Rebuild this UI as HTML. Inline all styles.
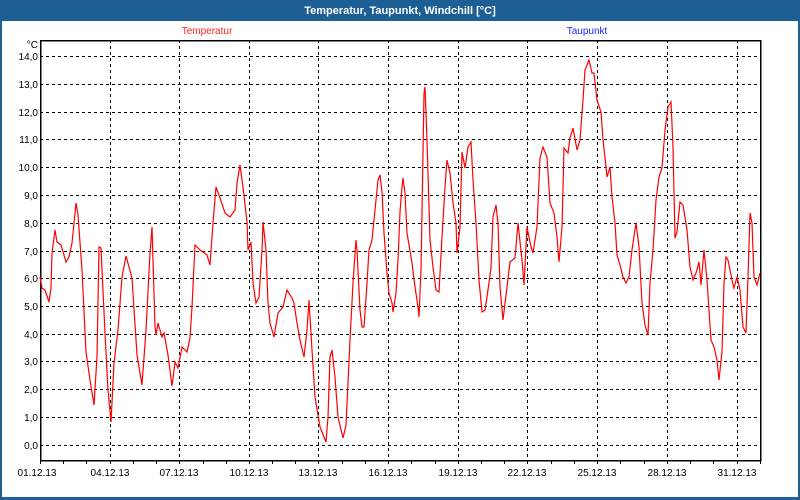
<!DOCTYPE html>
<html><head><meta charset="utf-8"><style>
html,body{margin:0;padding:0;width:800px;height:500px;overflow:hidden;background:#fff}
svg{display:block}
text{font-family:"Liberation Sans",sans-serif;font-size:10px}
</style></head><body>
<svg width="800" height="500" viewBox="0 0 800 500" xmlns="http://www.w3.org/2000/svg">
<rect x="0" y="0" width="800" height="500" fill="#1d5f95"/>
<rect x="2" y="21" width="796" height="476" fill="#fff"/>
<text x="400" y="14" text-anchor="middle" fill="#fff" style="font-weight:bold;font-size:11px">Temperatur, Taupunkt, Windchill [°C]</text>
<text x="207" y="34" text-anchor="middle" fill="#ff2020">Temperatur</text>
<text x="587" y="34" text-anchor="middle" fill="#2020ff">Taupunkt</text>
<g stroke="#000" stroke-width="1" stroke-dasharray="3,3" shape-rendering="crispEdges">
<path d="M40 56.5H760M40 84.5H760M40 112.5H760M40 139.5H760M40 167.5H760M40 195.5H760M40 223.5H760M40 251.5H760M40 278.5H760M40 306.5H760M40 334.5H760M40 361.5H760M40 389.5H760M40 417.5H760M40 445.5H760"/>
<path d="M110.5 40V460M179.5 40V460M249.5 40V460M318.5 40V460M388.5 40V460M458.5 40V460M527.5 40V460M597.5 40V460M667.5 40V460M737.5 40V460"/>
</g>
<rect x="40.5" y="40.5" width="720" height="420" fill="none" stroke="#000" stroke-width="1.5" shape-rendering="crispEdges"/>
<g stroke="#000" stroke-width="1" shape-rendering="crispEdges" id="ticks"></g>
<polyline fill="none" stroke="#ff0000" stroke-width="1.2" points="40,277 42,288 45,290 49,302 51,288 52,253 55,230 57,242 61,245 66,262 69,257 72,243 76,203 78,215 82,270 86,352 90,380 94,405 97,357 99,247 101,248 105,333 108,390 111,422 114,363 118,330 122,277 126,256 132,278 137,355 142,385 146,330 150,253 152,227 155,327 156,335 158,323 162,337 164,333 168,355 172,386 175,362 178,368 182,347 187,352 190,338 192,307 195,245 200,250 207,255 210,265 213,223 216,187 220,198 225,213 230,217 235,210 237,183 240,165 243,187 247,222 248,250 251,242 253,283 256,303 259,297 262,250 263,222 266,250 268,303 270,323 274,337 278,313 283,307 287,290 292,298 294,303 297,323 300,340 304,357 307,330 309,300 312,350 315,397 320,427 326,442 328,417 330,357 332,350 335,377 338,417 343,438 346,425 350,340 353,283 356,240 357,250 360,310 362,327 364,327 367,283 369,250 372,240 375,210 378,180 380,175 382,192 384,233 387,273 389,293 392,303 393,312 396,293 398,260 400,212 402,187 403,178 405,193 407,233 412,263 415,287 418,307 419,317 421,270 423,153 424,93 425,87 427,140 430,240 433,267 436,290 439,292 442,237 445,187 447,160 450,173 453,203 456,223 457,253 460,227 462,152 465,168 468,147 471,142 473,180 476,223 479,280 482,312 485,310 487,297 491,268 493,217 496,205 498,223 500,287 503,320 507,287 510,262 515,258 518,223 522,260 524,285 527,227 531,247 533,253 537,227 540,158 543,147 547,157 550,203 554,213 557,237 559,262 562,227 564,148 568,153 570,138 573,128 577,150 580,140 583,100 585,70 589,60 592,73 594,73 597,100 601,112 603,140 606,167 607,177 610,167 612,197 615,223 617,255 620,265 623,277 626,283 629,277 632,250 636,223 639,247 642,303 645,325 648,335 650,283 653,250 656,200 659,177 662,168 665,130 668,107 671,102 673,147 675,238 677,232 680,202 683,205 687,230 690,267 693,280 696,273 699,262 701,285 704,250 707,280 711,340 714,347 717,360 719,380 722,352 724,283 726,257 728,260 732,280 734,288 737,277 740,290 743,327 746,333 748,277 750,213 752,223 754,277 757,285 760,273"/>
<g text-anchor="end" fill="#000">
<text x="38" y="48">°C</text>
<text x="38" y="60">14,0</text><text x="38" y="88">13,0</text><text x="38" y="116">12,0</text><text x="38" y="143">11,0</text><text x="38" y="171">10,0</text><text x="38" y="199">9,0</text><text x="38" y="227">8,0</text><text x="38" y="255">7,0</text><text x="38" y="282">6,0</text><text x="38" y="310">5,0</text><text x="38" y="338">4,0</text><text x="38" y="365">3,0</text><text x="38" y="393">2,0</text><text x="38" y="421">1,0</text><text x="38" y="449">0,0</text>
</g>
<g stroke="#000" stroke-width="1" shape-rendering="crispEdges">
<path d="M63.5 460v4M86.5 460v4M110.5 460v4M133.5 460v4M156.5 460v4M179.5 460v4M203.5 460v4M226.5 460v4M249.5 460v4M272.5 460v4M295.5 460v4M318.5 460v4M342.5 460v4M365.5 460v4M388.5 460v4M411.5 460v4M435.5 460v4M458.5 460v4M481.5 460v4M504.5 460v4M527.5 460v4M551.5 460v4M574.5 460v4M597.5 460v4M620.5 460v4M644.5 460v4M667.5 460v4M690.5 460v4M713.5 460v4M737.5 460v4M40.5 460v4M760.5 460v4"/>
</g>
<g text-anchor="middle" fill="#000">
<text x="37" y="476">01.12.13</text><text x="110" y="476">04.12.13</text><text x="179" y="476">07.12.13</text><text x="249" y="476">10.12.13</text><text x="318" y="476">13.12.13</text><text x="388" y="476">16.12.13</text><text x="458" y="476">19.12.13</text><text x="527" y="476">22.12.13</text><text x="597" y="476">25.12.13</text><text x="667" y="476">28.12.13</text><text x="737" y="476">31.12.13</text>
</g>
</svg>
</body></html>
